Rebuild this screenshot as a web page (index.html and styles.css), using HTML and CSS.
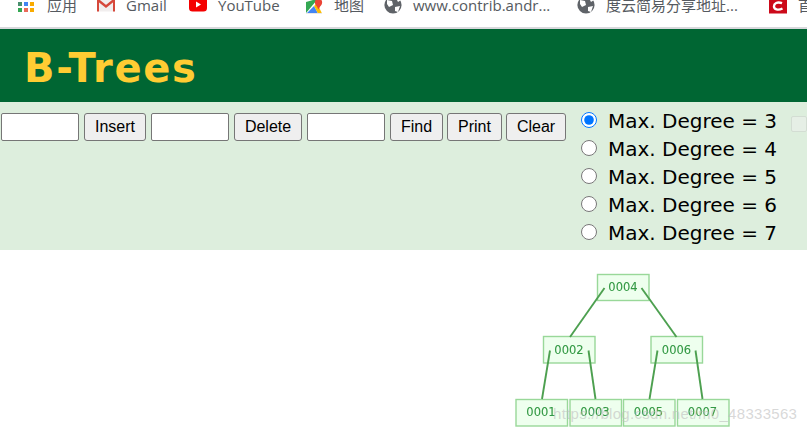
FILE: index.html
```html
<!DOCTYPE html>
<html lang="zh">
  <head>
    <meta charset="UTF-8" />
    <meta name="viewport" content="width=device-width, initial-scale=1.0" />
    <title>B-Trees</title>
    <link rel="stylesheet" href="styles.css">
  </head>
  <body>
    <nav class="bookmarks">
      <div class="bookmark bm-apps">
        <svg class="bm-icon" viewBox="0 0 18 18">
          <rect x="0" y="2" width="4" height="4" fill="#4a8f6e" />
          <rect x="6" y="2" width="4" height="4" fill="#4285f4" />
          <rect x="12" y="2" width="4" height="4" fill="#f9ab00" />
          <rect x="0" y="8" width="4" height="4" fill="#34a853" />
          <rect x="6" y="8" width="4" height="4" fill="#ea6a5a" />
          <rect x="12" y="8" width="4" height="4" fill="#f9ab00" />
        </svg>
        <span>应用</span>
      </div>
      <div class="bookmark bm-gmail">
        <svg class="bm-icon" viewBox="0 0 18 18">
          <rect x="0.5" y="0" width="17" height="11.5" fill="#f1eeee" />
          <path d="M1 0 L9 6.5 L17 0" fill="none" stroke="#d6483b" stroke-width="2.4" />
          <path d="M1 0 V11.5 M17 0 V11.5" stroke="#d6483b" stroke-width="2" />
        </svg>
        <span>Gmail</span>
      </div>
      <div class="bookmark bm-youtube">
        <svg class="bm-icon" viewBox="0 0 18 18">
          <rect x="0" y="-4" width="18" height="15.5" rx="3.5" fill="#f40000" />
          <path d="M7 1.5 L12 4.5 L7 7.5 Z" fill="#fff" />
        </svg>
        <span>YouTube</span>
      </div>
      <div class="bookmark bm-maps">
        <svg class="bm-icon" viewBox="0 0 18 18">
          <path d="M1 2 L8 0 H12 L1 13 Z" fill="#34a853" />
          <path d="M1 14 L9 6 L13 13.5 Z" fill="#4285f4" />
          <path d="M9 6 L12 3 L17 13.5 H13 Z" fill="#fbbc05" />
          <circle cx="13.5" cy="2.5" r="3.6" fill="#ea4335" />
          <path d="M11 5 L13.5 9.5 L16 5 Z" fill="#ea4335" />
          <path d="M1 13.5 H17" stroke="#e8e8e8" stroke-width="1" />
        </svg>
        <span>地图</span>
      </div>
      <div class="bookmark bm-contrib">
        <svg class="bm-icon" viewBox="0 0 18 18">
          <circle cx="9" cy="5" r="8.6" fill="#5f6368" />
          <path d="M3 0 L8 1 L9 5 L5 7 L3 4 Z M11 7 L16 6 L14 12 L11 11 Z M12 -2 L17 0 L14 2 Z" fill="#fff" />
        </svg>
        <span>www.contrib.andr...</span>
      </div>
      <div class="bookmark bm-baidu">
        <svg class="bm-icon" viewBox="0 0 18 18">
          <circle cx="9" cy="5" r="8.6" fill="#5f6368" />
          <path d="M3 0 L8 1 L9 5 L5 7 L3 4 Z M11 7 L16 6 L14 12 L11 11 Z M12 -2 L17 0 L14 2 Z" fill="#fff" />
        </svg>
        <span>度云简易分享地址...</span>
      </div>
      <div class="bookmark bm-home">
        <svg class="bm-icon bm-icon-wide" viewBox="0 0 20 20">
          <rect x="0" y="0" width="20" height="15" fill="#cc0a1a" />
          <path d="M14.5 3.5 C9 1.5 5.5 4 5.5 7 C5.5 10.5 10 12 15 9.5" fill="none" stroke="#fff" stroke-width="2.6" />
        </svg>
        <span>首页</span>
      </div>
    </nav>

    <header class="title-bar">
      <h1>B-Trees</h1>
    </header>

    <section class="controls">
      <div class="actions">
        <input type="text" class="field" />
        <button class="btn btn-insert">Insert</button>
        <input type="text" class="field" />
        <button class="btn btn-delete">Delete</button>
        <input type="text" class="field" />
        <button class="btn btn-find">Find</button>
        <button class="btn btn-print">Print</button>
        <button class="btn btn-clear">Clear</button>
      </div>
      <div class="degrees">
        <label class="degree"><input type="radio" name="degree" checked />Max. Degree = 3</label>
        <label class="degree"><input type="radio" name="degree" />Max. Degree = 4</label>
        <label class="degree"><input type="radio" name="degree" />Max. Degree = 5</label>
        <label class="degree"><input type="radio" name="degree" />Max. Degree = 6</label>
        <label class="degree"><input type="radio" name="degree" />Max. Degree = 7</label>
      </div>
      <span class="check-off"></span>
    </section>

    <main class="canvas">
      <svg class="tree" width="807" height="182" viewBox="0 250 807 182">
        <g class="node">
          <rect x="597.5" y="274.5" width="51.5" height="26" />
          <text x="623" y="291">0004</text>
        </g>
        <g class="node">
          <rect x="543.5" y="336.5" width="51.5" height="26.5" />
          <text x="569" y="353.5">0002</text>
        </g>
        <g class="node">
          <rect x="651" y="336.5" width="51.5" height="26.5" />
          <text x="676.5" y="353.5">0006</text>
        </g>
        <g class="node">
          <rect x="516" y="399.5" width="51.5" height="26.5" />
          <text x="541" y="416">0001</text>
        </g>
        <g class="node">
          <rect x="570" y="399.5" width="51.5" height="26.5" />
          <text x="595" y="416">0003</text>
        </g>
        <g class="node">
          <rect x="623.5" y="399.5" width="51.5" height="26.5" />
          <text x="648.5" y="416">0005</text>
        </g>
        <g class="node">
          <rect x="677.5" y="399.5" width="51.5" height="26.5" />
          <text x="702.5" y="416">0007</text>
        </g>
        <line x1="604.5" y1="288" x2="570" y2="337" />
        <line x1="641.5" y1="288" x2="676.5" y2="337" />
        <line x1="550" y1="350.5" x2="542" y2="399" />
        <line x1="588.5" y1="350.5" x2="595.5" y2="399" />
        <line x1="657.5" y1="350.5" x2="649.5" y2="399" />
        <line x1="695.5" y1="350.5" x2="702.5" y2="399" />
      </svg>
      <span class="watermark">https://blog.csdn.net/m0_48333563</span>
    </main>
  </body>
</html>
```

FILE: styles.css
```css
* {
  margin: 0;
  padding: 0;
  box-sizing: border-box;
}
html,
body {
  height: 432px;
  overflow: hidden;
}
body {
  font-family: "Liberation Sans", Arial, sans-serif;
  background: #fff;
}

.bookmarks {
  height: 29px;
  display: flex;
  align-items: flex-start;
  padding-left: 18px;
  background: #fff;
  border-bottom: 2px solid #d8d8dc;
  overflow: hidden;
}
.bookmark {
  display: flex;
  align-items: flex-start;
  flex-shrink: 0;
  font-family: "Open Sans", "Noto Sans CJK SC", sans-serif;
  font-size: 15px;
  line-height: 15px;
  color: #555a60;
  white-space: nowrap;
}
.bookmark span {
  margin-top: -2px;
}
.bm-icon {
  width: 18px;
  height: 18px;
  margin-right: 11px;
  flex-shrink: 0;
}
.bm-icon-wide {
  width: 20px;
  margin-right: 10px;
}
.bm-apps {
  width: 79px;
}
.bm-gmail {
  width: 92px;
}
.bm-youtube {
  width: 116px;
}
.bm-maps {
  width: 79px;
}
.bm-contrib {
  width: 193px;
}
.bm-baidu {
  width: 191px;
}

.title-bar {
  height: 73px;
  display: flex;
  align-items: center;
  padding: 4px 0 0 24px;
  background: #006633;
}
.title-bar h1 {
  font-family: "DejaVu Sans", Verdana, sans-serif;
  font-size: 40px;
  font-weight: bold;
  letter-spacing: 1.65px;
  color: #ffcc33;
}

.controls {
  height: 148px;
  display: flex;
  align-items: flex-start;
  background: #ddeedd;
}
.actions {
  display: flex;
  gap: 5px;
  padding: 11px 0 0 1px;
}
.field {
  width: 78px;
  height: 28px;
  background: #fff;
  border: 1px solid #767676;
  border-radius: 2px;
}
.btn {
  height: 28px;
  font-family: "Liberation Sans", Arial, sans-serif;
  font-size: 16px;
  color: #000;
  background: #efefef;
  border: 1px solid #767676;
  border-radius: 3px;
}
.btn-insert {
  width: 62px;
}
.btn-delete {
  width: 68px;
}
.btn-find {
  width: 53px;
  margin-right: -1px;
}
.btn-print {
  width: 55px;
  margin-right: -1px;
}
.btn-clear {
  width: 60px;
}

.degrees {
  display: flex;
  flex-direction: column;
  padding: 5px 0 0 15px;
}
.degree {
  height: 28px;
  display: flex;
  align-items: center;
  font-family: "DejaVu Sans", Verdana, sans-serif;
  font-size: 20px;
  color: #000;
  white-space: nowrap;
}
.degree input {
  width: 16px;
  height: 16px;
  margin-right: 11px;
  margin-top: -2px;
}
.check-off {
  width: 16px;
  height: 16px;
  margin: 14px 0 0 14px;
  flex-shrink: 0;
  background: #e6efe6;
  border: 1px solid #d3ddd3;
  border-radius: 2px;
}

.canvas {
  position: relative;
  height: 182px;
  overflow: hidden;
  background: #fff;
}
.tree {
  display: block;
  filter: blur(0.4px);
}
.node rect {
  fill: #eeffee;
  stroke: #99d899;
  stroke-width: 1.4;
}
.node text {
  font-family: "DejaVu Sans", Verdana, sans-serif;
  font-size: 11.5px;
  fill: #339944;
  stroke: #339944;
  stroke-width: 0.1;
  text-anchor: middle;
}
.tree line {
  stroke: #4da050;
  stroke-width: 1.9;
}
.watermark {
  position: absolute;
  left: 553px;
  top: 155px;
  font-size: 15px;
  letter-spacing: 0.3px;
  color: rgba(190, 190, 190, 0.6);
  white-space: nowrap;
}
```
